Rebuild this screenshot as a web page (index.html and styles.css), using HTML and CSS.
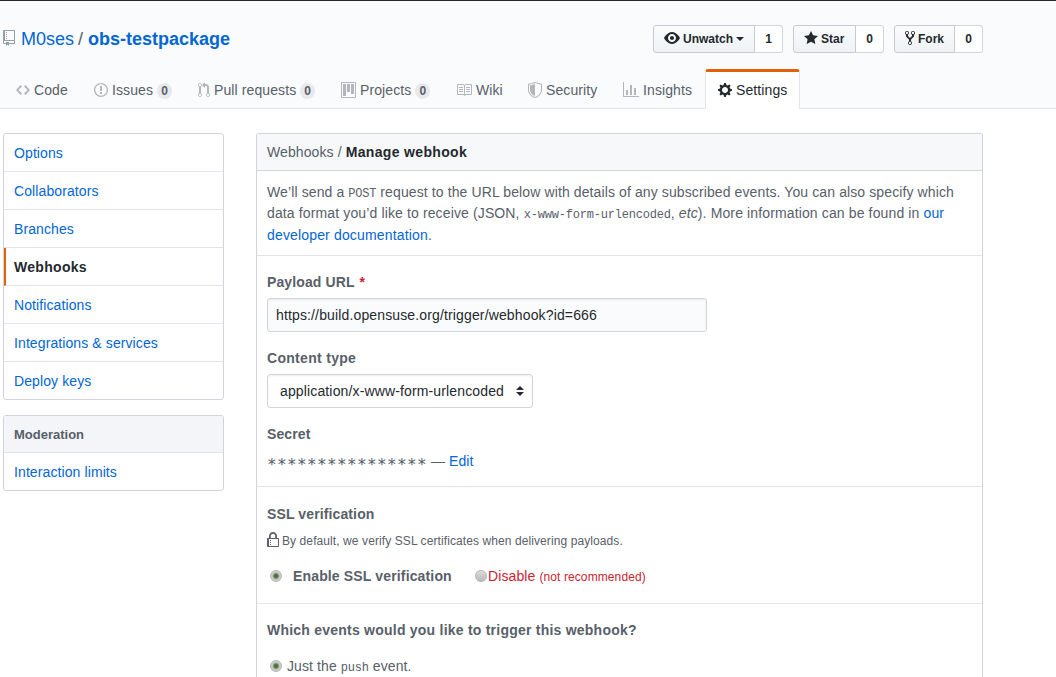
FILE: index.html
```html
<!DOCTYPE html>
<html lang="en">
<head>
<meta charset="utf-8">
<title>Manage webhook</title>
<link rel="stylesheet" href="styles.css">
</head>
<body>
<header class="repohead">
  <div class="container title-row">
    <h1 class="repo-title">
      <svg class="icon repo-icon" width="12" height="16" viewBox="0 0 12 16"><path fill-rule="evenodd" d="M4 9H3V8h1v1zm0-3H3v1h1V6zm0-2H3v1h1V4zm0-2H3v1h1V2zm8-1v12c0 .55-.45 1-1 1H6v2l-1.5-1.5L3 16v-2H1c-.55 0-1-.45-1-1V1c0-.55.45-1 1-1h10c.55 0 1 .45 1 1zm-1 10H1v2h2v-1h3v1h5v-2zm0-10H2v9h9V1z"/></svg>
      <a class="owner">M0ses</a><span class="slash">/</span><a class="repo">obs-testpackage</a>
    </h1>
    <div class="actions">
      <div class="action"><span class="btn btn-watch"><svg class="icon" width="16" height="16" viewBox="0 0 16 16"><path fill-rule="evenodd" d="M8.06 2C3 2 0 8 0 8s3 6 8.06 6C13 14 16 8 16 8s-3-6-7.94-6zM8 12c-2.2 0-4-1.78-4-4 0-2.2 1.8-4 4-4 2.22 0 4 1.8 4 4 0 2.22-1.78 4-4 4zm2-4c0 1.11-.89 2-2 2-1.11 0-2-.89-2-2 0-1.11.89-2 2-2 1.11 0 2 .89 2 2z"/></svg><span>Unwatch</span><i class="caret"></i></span><span class="count">1</span></div>
      <div class="action"><span class="btn btn-star"><svg class="icon" width="14" height="16" viewBox="0 0 14 16"><path d="M14 6l-4.9-.64L7 1 4.9 5.36 0 6l3.6 3.26L2.67 14 7 11.67 11.33 14l-.93-4.74L14 6z"/></svg><span>Star</span></span><span class="count">0</span></div>
      <div class="action"><span class="btn btn-fork"><svg class="icon" width="10" height="16" viewBox="0 0 10 16"><path fill-rule="evenodd" d="M8 1a1.993 1.993 0 0 0-1 3.72V6L5 8 3 6V4.72A1.993 1.993 0 0 0 2 1a1.993 1.993 0 0 0-1 3.72V6.5l3 3v1.78A1.993 1.993 0 0 0 5 15a1.993 1.993 0 0 0 1-3.72V9.5l3-3V4.72A1.993 1.993 0 0 0 8 1zM2 4.2C1.34 4.2.8 3.65.8 3c0-.65.55-1.2 1.2-1.2.65 0 1.2.55 1.2 1.2 0 .65-.55 1.2-1.2 1.2zm3 10c-.66 0-1.2-.55-1.2-1.2 0-.65.55-1.2 1.2-1.2.65 0 1.2.55 1.2 1.2 0 .65-.55 1.2-1.2 1.2zm3-10c-.66 0-1.2-.55-1.2-1.2 0-.65.55-1.2 1.2-1.2.65 0 1.2.55 1.2 1.2 0 .65-.55 1.2-1.2 1.2z"/></svg><span>Fork</span></span><span class="count">0</span></div>
    </div>
  </div>
  <nav class="container tabs">
    <a class="tab tab-code"><svg class="icon" width="14" height="16" viewBox="0 0 14 16"><path d="M9.5 3L8 4.5 11.5 8 8 11.5 9.5 13 14 8 9.5 3zm-5 0L0 8l4.5 5L6 11.5 2.5 8 6 4.5 4.5 3z"/></svg><span>Code</span></a>
    <a class="tab tab-issues"><svg class="icon" width="14" height="16" viewBox="0 0 14 16"><path fill-rule="evenodd" d="M7 2.3c3.14 0 5.7 2.56 5.7 5.7s-2.56 5.7-5.7 5.7A5.71 5.71 0 0 1 1.3 8c0-3.14 2.56-5.7 5.7-5.7zM7 1C3.14 1 0 4.14 0 8s3.14 7 7 7 7-3.14 7-7-3.14-7-7-7zm1 3H6v5h2V4zm0 6H6v2h2v-2z"/></svg><span>Issues</span><b class="counter">0</b></a>
    <a class="tab tab-pulls"><svg class="icon" width="12" height="16" viewBox="0 0 12 16"><path fill-rule="evenodd" d="M11 11.28V5c-.03-.78-.34-1.47-.94-2.06C9.46 2.35 8.78 2.03 8 2H7V0L4 3l3 3V4h1c.27.02.48.11.69.31.21.2.3.42.31.69v6.28A1.993 1.993 0 0 0 10 15a1.993 1.993 0 0 0 1-3.72zm-1 2.92c-.66 0-1.2-.55-1.2-1.2 0-.65.55-1.2 1.2-1.2.65 0 1.2.55 1.2 1.2 0 .65-.55 1.2-1.2 1.2zM4 3c0-1.11-.89-2-2-2a1.993 1.993 0 0 0-1 3.72v6.56A1.993 1.993 0 0 0 2 15a1.993 1.993 0 0 0 1-3.72V4.72c.59-.34 1-.98 1-1.72zm-.8 10c0 .66-.55 1.2-1.2 1.2-.65 0-1.2-.55-1.2-1.2 0-.65.55-1.2 1.2-1.2.65 0 1.2.55 1.2 1.2zM2 4.2C1.34 4.2.8 3.65.8 3c0-.65.55-1.2 1.2-1.2.65 0 1.2.55 1.2 1.2 0 .65-.55 1.2-1.2 1.2z"/></svg><span>Pull requests</span><b class="counter">0</b></a>
    <a class="tab tab-projects"><svg class="icon" width="15" height="16" viewBox="0 0 15 16"><path fill-rule="evenodd" d="M10 12h3V2h-3v10zm-4-2h3V2H6v8zm-4 4h3V2H2v12zm-1 1h13V1H1v14zM14 0H1a1 1 0 0 0-1 1v14a1 1 0 0 0 1 1h13a1 1 0 0 0 1-1V1a1 1 0 0 0-1-1z"/></svg><span>Projects</span><b class="counter">0</b></a>
    <a class="tab tab-wiki"><svg class="icon" width="16" height="16" viewBox="0 0 16 16"><path fill-rule="evenodd" d="M3 5h4v1H3V5zm0 3h4V7H3v1zm0 2h4V9H3v1zm11-5h-4v1h4V5zm0 2h-4v1h4V7zm0 2h-4v1h4V9zm2-6v9c0 .55-.45 1-1 1H9.5l-1 1-1-1H2c-.55 0-1-.45-1-1V3c0-.55.45-1 1-1h5.5l1 1 1-1H15c.55 0 1 .45 1 1zm-8 .5L7.5 3H2v9h6V3.5zm7-.5H9.5l-.5.5V12h6V3z"/></svg><span>Wiki</span></a>
    <a class="tab tab-security"><svg class="icon" width="14" height="16" viewBox="0 0 14 16"><path fill-rule="evenodd" d="M0 2l7-2 7 2v6.02C14 12.69 8.69 16 7 16c-1.69 0-7-3.31-7-7.98V2zm1 .75L7 1l6 1.75v5.268C13 12.104 8.449 15 7 15c-1.449 0-6-2.896-6-6.982V2.75zm1 .75L7 2v12c-1.207 0-5-2.482-5-5.985V3.5z"/></svg><span>Security</span></a>
    <a class="tab tab-insights"><svg class="icon" width="16" height="16" viewBox="0 0 16 16"><path d="M16 14v1H0V0h1v14h15zM5 13H3V8h2v5zm4 0H7V3h2v10zm4 0h-2V6h2v7z"/></svg><span>Insights</span></a>
    <a class="tab tab-settings selected"><svg class="icon" width="14" height="16" viewBox="0 0 14 16"><path fill-rule="evenodd" d="M14 8.77v-1.6l-1.94-.64-.45-1.09.88-1.84-1.13-1.13-1.81.91-1.09-.45-.69-1.92h-1.6l-.63 1.94-1.11.45-1.84-.88-1.13 1.13.91 1.81-.45 1.09L0 7.23v1.59l1.94.64.45 1.09-.88 1.84 1.13 1.13 1.81-.91 1.09.45.69 1.92h1.59l.63-1.94 1.11-.45 1.84.88 1.13-1.13-.92-1.81.47-1.09L14 8.75v.02zM7 11c-1.66 0-3-1.34-3-3s1.34-3 3-3 3 1.34 3 3-1.34 3-3 3z"/></svg><span>Settings</span></a>
  </nav>
</header>
<div class="container layout">
  <aside class="sidebar">
    <nav class="menu">
      <a class="menu-item">Options</a>
      <a class="menu-item">Collaborators</a>
      <a class="menu-item">Branches</a>
      <a class="menu-item current">Webhooks</a>
      <a class="menu-item">Notifications</a>
      <a class="menu-item">Integrations &amp; services</a>
      <a class="menu-item">Deploy keys</a>
    </nav>
    <nav class="menu">
      <span class="menu-heading">Moderation</span>
      <a class="menu-item">Interaction limits</a>
    </nav>
  </aside>
  <main class="panel">
    <div class="panel-head">Webhooks / <b>Manage webhook</b></div>
    <section class="intro">
      <p><span class="line l1">We’ll send a <code>POST</code> request to the URL below with details of any subscribed events. You can also specify which</span>
      <span class="line l2">data format you’d like to receive (JSON, <code>x-www-form-urlencoded</code>, <em>etc</em>). More information can be found in <a>our</a></span>
      <span class="line l3"><a>developer documentation</a>.</span></p>
    </section>
    <section class="fields">
      <div class="label">Payload URL <span class="required">*</span></div>
      <div class="input">https://build.opensuse.org/trigger/webhook?id=666</div>
      <div class="label content-type">Content type</div>
      <div class="select"><span>application/x-www-form-urlencoded</span><svg width="8" height="10" viewBox="0 0 8 10"><path d="M0 4l4-4 4 4zM0 6h8l-4 4z"/></svg></div>
      <div class="label">Secret</div>
      <div class="secret"><span class="stars">****************</span><span class="dash">—</span><a>Edit</a></div>
    </section>
    <section class="ssl">
      <div class="label">SSL verification</div>
      <div class="note"><svg class="icon" width="12" height="16" viewBox="0 0 12 16"><path fill-rule="evenodd" d="M4 13H3v-1h1v1zm8-6v7c0 .55-.45 1-1 1H1c-.55 0-1-.45-1-1V7c0-.55.45-1 1-1h1V4c0-2.2 1.8-4 4-4s4 1.8 4 4v2h1c.55 0 1 .45 1 1zM3.8 6h4.41V4c0-1.22-.98-2.2-2.2-2.2-1.22 0-2.2.98-2.2 2.2v2H3.8zM11 7H2v7h9V7zM4 8H3v1h1V8zm0 2H3v1h1v-1z"/></svg><span>By default, we verify SSL certificates when delivering payloads.</span></div>
      <div class="choices"><i class="radio on"></i><b class="enable">Enable SSL verification</b><i class="radio"></i><span class="disable">Disable</span><span class="hint">(not recommended)</span></div>
    </section>
    <section class="events">
      <div class="label question">Which events would you like to trigger this webhook?</div>
      <div class="event"><i class="radio on"></i><span>Just the <code>push</code> event.</span></div>
    </section>
  </main>
</div>
</body>
</html>
```
FILE: styles.css
```css
* { box-sizing: border-box; }
html, body { height: 677px; overflow: hidden; }
body {
  margin: 0;
  background: #fff;
  color: #586069;
  font: 14px/21px "Liberation Sans", Arial, sans-serif;
  letter-spacing: 0.1px;
}
a { color: #0366d6; }
.icon { display: block; flex: none; fill: currentColor; }
.container { width: 980px; margin-left: 3px; }

.repohead {
  height: 109px;
  background: #fafbfc;
  border-top: 1px solid #24292e;
  border-bottom: 1px solid #e1e4e8;
}
.title-row { display: flex; justify-content: space-between; height: 68px; padding-top: 24px; }
.repo-title { display: flex; margin: 0; font-size: 18px; line-height: 28px; font-weight: 400; letter-spacing: 0; }
.repo-icon { margin: 5px 6px 0 0; color: #959da5; }
.slash { margin: 0 5px 0 4px; }
.repo { font-weight: 700; }
.actions { display: flex; gap: 10px; }
.action { display: flex; height: 28px; color: #24292e; font-size: 12px; line-height: 26px; font-weight: 700; letter-spacing: 0; }
.btn {
  display: flex;
  align-items: center;
  gap: 3px;
  padding: 0 0 0 10px;
  border: 1px solid #c6cbd1;
  border-radius: 3px 0 0 3px;
  background: linear-gradient(#fafbfc, #eff3f6 90%);
}
.btn .icon { margin-bottom: 2px; }
.btn-watch { width: 102px; }
.btn-star { width: 63px; }
.btn-fork { width: 61px; }
.count { width: 28px; border: 1px solid #d1d5da; border-left: 0; border-radius: 0 3px 3px 0; background: #fff; text-align: center; }
.caret { border: 4px solid transparent; border-top-color: #24292e; border-bottom: 0; }

.tabs { display: flex; height: 40px; }
.tab { display: flex; flex: none; align-items: center; gap: 4px; padding: 3px 0 0 13px; color: #586069; }
.tab .icon { margin-bottom: 2px; color: #b3b7bb; }
.tab-code { width: 78px; }
.tab-issues { width: 104px; }
.tab-pulls { width: 143px; }
.tab-projects { width: 115px; }
.tab-wiki { width: 72px; }
.tab-security { width: 95px; }
.tab-insights { width: 95px; }
.tab-settings { width: 95px; }
.counter { width: 15px; height: 16px; border-radius: 8px; background: #e8e9eb; font-size: 12px; line-height: 17px; text-align: center; }
.tab.selected { padding: 0 0 0 12px; border: 1px solid #e1e4e8; border-top: 3px solid #e36209; border-bottom: 0; border-radius: 3px 3px 0 0; background: #fff; color: #24292e; }
.tab.selected .icon { color: #24292e; }

.layout { display: flex; gap: 32px; padding-top: 24px; }
.sidebar { display: flex; flex-direction: column; flex: none; gap: 15px; width: 221px; }
.menu { border: 1px solid #d1d5da; border-radius: 3px; overflow: hidden; }
.menu-item { display: block; height: 38px; padding-left: 10px; border-bottom: 1px solid #e1e4e8; line-height: 38px; }
.menu-item:last-child { height: 37px; border-bottom: 0; }
.menu-item.current { padding-left: 8px; border-left: 2px solid #e36209; color: #24292e; font-weight: 700; letter-spacing: 0.3px; }
.menu-heading { display: block; height: 37px; padding-left: 10px; border-bottom: 1px solid #e1e4e8; background: #f3f5f8; font-size: 13px; line-height: 37px; font-weight: 700; letter-spacing: 0; }

.panel { width: 727px; height: 544px; border: 1px solid #d1d5da; border-bottom: 0; border-radius: 3px 3px 0 0; }
.panel-head { height: 37px; padding-left: 10px; border-bottom: 1px solid #d1d5da; background: #f6f8fa; line-height: 37px; }
.panel-head b { color: #24292e; letter-spacing: 0.34px; }
section { padding: 0 10px; border-bottom: 1px solid #e1e4e8; }
.intro { height: 85px; padding-top: 11px; }
.intro p { margin: 0; }
.line { display: block; white-space: nowrap; line-height: 21px; }
.l1 { letter-spacing: 0.11px; }
.l2 { letter-spacing: 0.13px; }
.l3 { margin-top: 1px; letter-spacing: 0.16px; }
code { font: 12px "Liberation Mono", monospace; letter-spacing: -0.2px; }
.label { font-weight: 700; letter-spacing: 0.12px; }
.content-type { letter-spacing: 0.3px; }
.question { letter-spacing: 0.23px; }
.fields { height: 231px; padding-top: 16px; }
.required { margin-left: 1px; color: #cb2431; }
.input, .select { height: 34px; margin: 5px 0 16px; border: 1px solid #d1d5da; border-radius: 3px; box-shadow: inset 0 1px 2px rgba(27, 31, 35, 0.075); color: #24292e; line-height: 33px; letter-spacing: 0.14px; }
.input { width: 440px; padding-left: 8px; background: #fafbfc; }
.select { display: flex; align-items: center; justify-content: space-between; width: 266px; padding: 0 8px 0 12px; }
.select svg { fill: #24292e; }
.secret { display: flex; height: 21px; margin-top: 6px; }
.stars { width: 164px; padding-top: 3px; font-family: "DejaVu Sans Mono", monospace; font-size: 16px; letter-spacing: 0.37px; }
.dash { width: 18px; }
.ssl { height: 117px; padding-top: 17px; }
.note { display: flex; gap: 3px; margin-top: 7px; font-size: 12px; line-height: 18px; letter-spacing: 0.09px; }
.choices { display: flex; align-items: center; height: 21px; margin-top: 16px; }
.radio { flex: none; width: 12px; height: 12px; margin-bottom: 2px; border: 1px solid #b5b5b5; border-radius: 50%; background: linear-gradient(#ddd, #b8b8b8); }
.radio.on { margin-left: 3px; background: radial-gradient(circle, #526d40 0 1.5px, #80996e 2.5px, #ccc 3.8px); }
.enable { width: 182px; margin-left: 11px; letter-spacing: 0.15px; }
.disable { margin-left: 1px; color: #cb2431; }
.hint { margin-left: 4px; padding-top: 2px; color: #cb2431; font-size: 12px; letter-spacing: 0.1px; }
.events { padding-top: 16px; border-bottom: 0; }
.event { display: flex; align-items: center; gap: 5px; height: 21px; margin-top: 15px; }
```
